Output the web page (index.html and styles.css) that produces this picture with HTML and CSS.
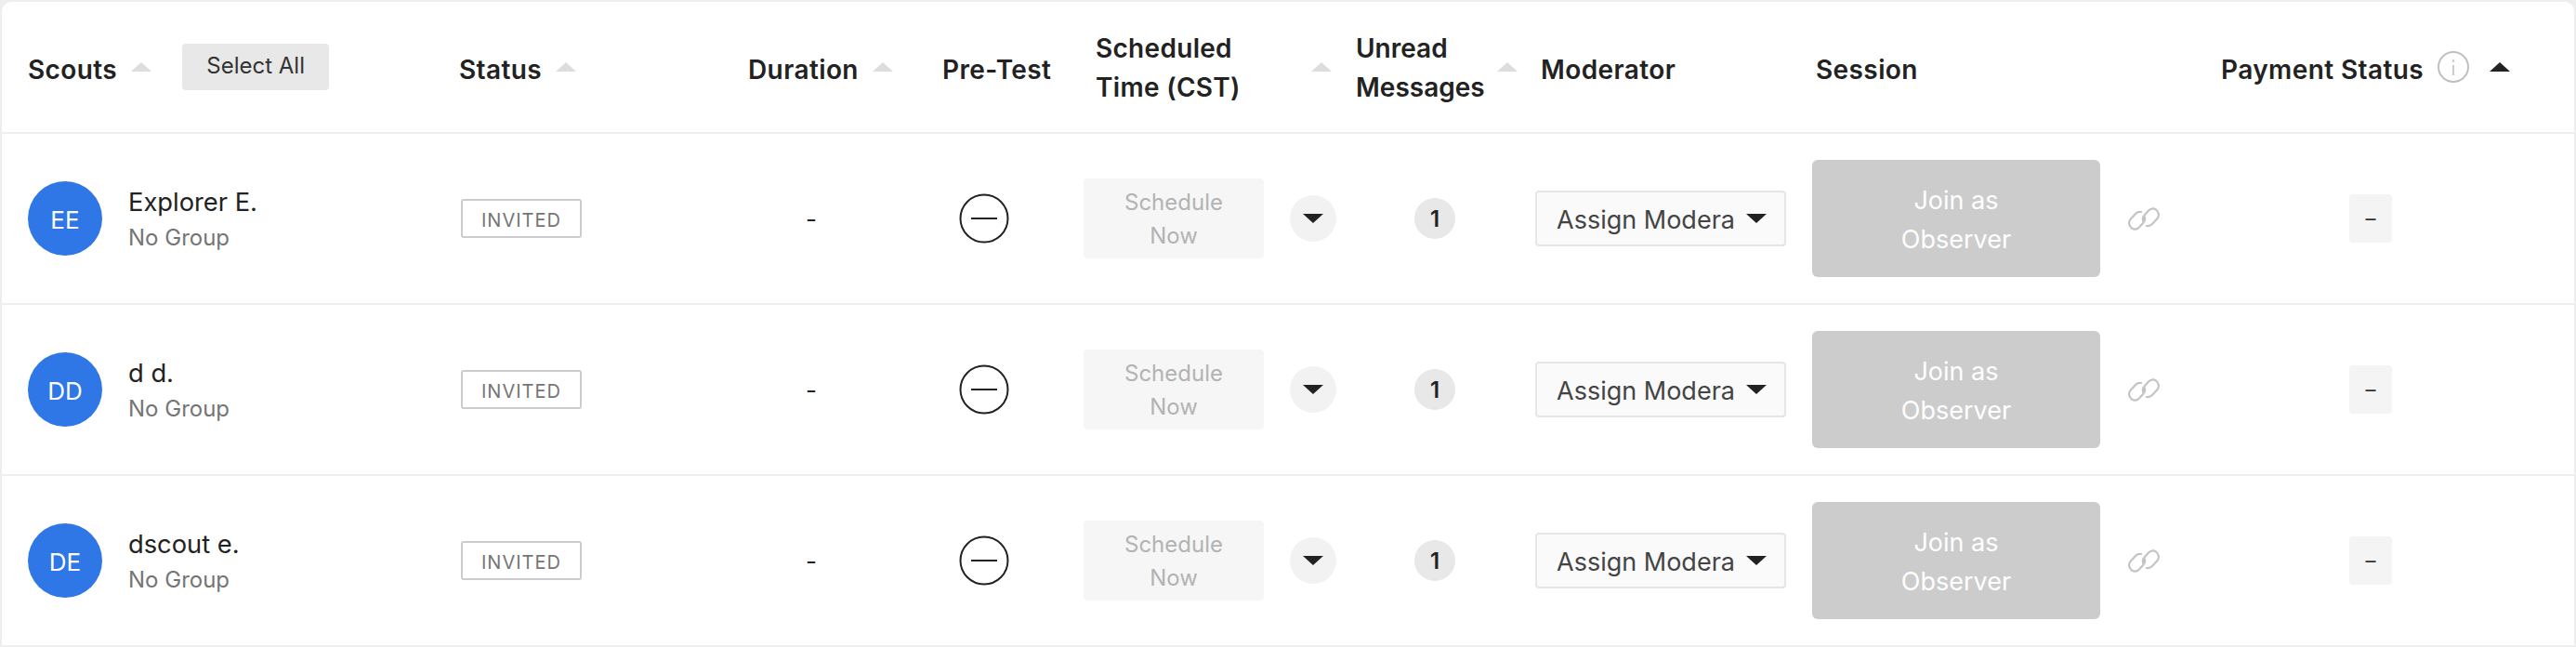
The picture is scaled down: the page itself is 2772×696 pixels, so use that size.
FILE: index.html
```html
<!DOCTYPE html>
<html lang="en">
<head>
<meta charset="utf-8">
<title>Scouts</title>
<link rel="stylesheet" href="styles.css">
</head>
<body>
<main class="card">
  <div class="row head">
    <div class="c-scout"><span class="th">Scouts</span><i class="sort"></i><button class="select-all">Select All</button></div>
    <div class="c-status"><span class="th">Status</span><i class="sort"></i></div>
    <div class="c-duration"><span class="th">Duration</span><i class="sort"></i></div>
    <div class="c-pretest"><span class="th">Pre-Test</span></div>
    <div class="c-sched"><span class="th th-wide">Scheduled Time (CST)</span><i class="sort"></i></div>
    <div class="c-unread"><span class="th th-narrow">Unread Messages</span><i class="sort"></i></div>
    <div class="c-mod"><span class="th">Moderator</span></div>
    <div class="c-session"><span class="th">Session</span></div>
    <div class="c-pay"><span class="th">Payment Status</span>
      <svg class="info" viewBox="0 0 34 34" aria-hidden="true"><circle cx="17" cy="17" r="16" fill="none" stroke="#c0c0c0" stroke-width="2"/><path d="M17 15v11" stroke="#c0c0c0" stroke-width="1.600"/><circle cx="17" cy="10.500" r="1.200" fill="#c0c0c0"/></svg>
      <i class="sort dark"></i></div>
  </div>

  <div class="row body">
    <div class="c-scout"><span class="avatar">EE</span><div class="who"><div class="name">Explorer E.</div><div class="group">No Group</div></div></div>
    <div class="c-status"><span class="tag">INVITED</span></div>
    <div class="c-duration"><span class="dash">-</span></div>
    <div class="c-pretest"><svg class="minus" viewBox="0 0 54 54" aria-hidden="true"><circle cx="27" cy="27" r="25.500" fill="none" stroke="#222" stroke-width="2"/><path d="M13 27h28" stroke="#222" stroke-width="2"/></svg></div>
    <div class="c-sched"><button class="schedule">Schedule Now</button><span class="round"><i class="down"></i></span></div>
    <div class="c-unread"><span class="count">1</span></div>
    <div class="c-mod"><div class="select"><span class="select-text">Assign Modera</span><i class="down"></i></div></div>
    <div class="c-session"><button class="join">Join as Observer</button><svg class="link" viewBox="0 0 34 25" aria-hidden="true"><path d="M14 5C11 4.500 9 6 8 7L2.500 13C0 16 1 20 4 22.500C7 24.500 10 23.500 12 21.500L16 17C18 15 18.500 12 17.500 10" /><path d="M20 20C23 20.500 25 19 26 18L31.500 12C34 9 33 5 30 2.500C27 .5 24 1.500 22 3.500L18 8C16 10 15.500 13 16.500 15"/></svg></div>
    <div class="c-pay"><span class="pay-box">–</span></div>
  </div>

  <div class="row body">
    <div class="c-scout"><span class="avatar">DD</span><div class="who"><div class="name">d d.</div><div class="group">No Group</div></div></div>
    <div class="c-status"><span class="tag">INVITED</span></div>
    <div class="c-duration"><span class="dash">-</span></div>
    <div class="c-pretest"><svg class="minus" viewBox="0 0 54 54" aria-hidden="true"><circle cx="27" cy="27" r="25.500" fill="none" stroke="#222" stroke-width="2"/><path d="M13 27h28" stroke="#222" stroke-width="2"/></svg></div>
    <div class="c-sched"><button class="schedule">Schedule Now</button><span class="round"><i class="down"></i></span></div>
    <div class="c-unread"><span class="count">1</span></div>
    <div class="c-mod"><div class="select"><span class="select-text">Assign Modera</span><i class="down"></i></div></div>
    <div class="c-session"><button class="join">Join as Observer</button><svg class="link" viewBox="0 0 34 25" aria-hidden="true"><path d="M14 5C11 4.500 9 6 8 7L2.500 13C0 16 1 20 4 22.500C7 24.500 10 23.500 12 21.500L16 17C18 15 18.500 12 17.500 10" /><path d="M20 20C23 20.500 25 19 26 18L31.500 12C34 9 33 5 30 2.500C27 .5 24 1.500 22 3.500L18 8C16 10 15.500 13 16.500 15"/></svg></div>
    <div class="c-pay"><span class="pay-box">–</span></div>
  </div>

  <div class="row body">
    <div class="c-scout"><span class="avatar">DE</span><div class="who"><div class="name">dscout e.</div><div class="group">No Group</div></div></div>
    <div class="c-status"><span class="tag">INVITED</span></div>
    <div class="c-duration"><span class="dash">-</span></div>
    <div class="c-pretest"><svg class="minus" viewBox="0 0 54 54" aria-hidden="true"><circle cx="27" cy="27" r="25.500" fill="none" stroke="#222" stroke-width="2"/><path d="M13 27h28" stroke="#222" stroke-width="2"/></svg></div>
    <div class="c-sched"><button class="schedule">Schedule Now</button><span class="round"><i class="down"></i></span></div>
    <div class="c-unread"><span class="count">1</span></div>
    <div class="c-mod"><div class="select"><span class="select-text">Assign Modera</span><i class="down"></i></div></div>
    <div class="c-session"><button class="join">Join as Observer</button><svg class="link" viewBox="0 0 34 25" aria-hidden="true"><path d="M14 5C11 4.500 9 6 8 7L2.500 13C0 16 1 20 4 22.500C7 24.500 10 23.500 12 21.500L16 17C18 15 18.500 12 17.500 10" /><path d="M20 20C23 20.500 25 19 26 18L31.500 12C34 9 33 5 30 2.500C27 .5 24 1.500 22 3.500L18 8C16 10 15.500 13 16.500 15"/></svg></div>
    <div class="c-pay"><span class="pay-box">–</span></div>
  </div>
</main>
</body>
</html>
```

FILE: styles.css
```css
* { box-sizing: border-box; }
html, body { margin: 0; height: 696px; overflow: hidden; }
body {
  background: #eeeeee;
  padding: 2px 2px 0;
  font-family: Inter, "Noto Sans", sans-serif;
  font-size: 26px;
  color: #222;
}
button { font-family: inherit; border: 0; padding: 0; }
.card {
  width: 2768px;
  background: #fff;
  border-radius: 10px 10px 0 0;
}
.row {
  display: grid;
  grid-template-columns: 492px 287px 184px 188px 305px 192px 295px 435px 390px;
  align-items: center;
  border-bottom: 2px solid #eeeeee;
}
.row > div { display: flex; align-items: center; }
.head { height: 142px; }
.body { height: 184px; }

.th { font-weight: 600; line-height: 42px; color: #222; font-size: 28px; letter-spacing: .4px; padding-top: 5px; }
.th-wide { width: 200px; padding-top: 2px; letter-spacing: .3px; }
.th-narrow { width: 170px; padding-top: 2px; letter-spacing: 0; }
.sort {
  display: block;
  width: 0; height: 0;
  border-left: 11px solid transparent;
  border-right: 11px solid transparent;
  border-bottom: 10px solid #dddddd;
}
.sort.dark { border-bottom-color: #222; margin-left: 22px; }
.down {
  display: block;
  width: 0; height: 0;
  border-left: 11px solid transparent;
  border-right: 11px solid transparent;
  border-top: 10px solid #222;
}

.c-scout { padding-left: 28px; }
.head .c-scout .sort { margin-left: 15px; }
.select-all {
  margin-left: 33px;
  width: 158px; height: 50px;
  background: #e8e8e8;
  border-radius: 4px;
  font-size: 24px;
  line-height: 46px;
  padding-bottom: 2px;
  color: #333;
}
.head .c-status .sort { margin-left: 15px; }
.c-status { padding-left: 2px; }
.head .c-status { padding-left: 0; }
.head .c-duration { padding-left: 24px; }
.head .c-duration .sort { margin-left: 15px; }
.body .c-duration { justify-content: center; }
.head .c-pretest { padding-left: 49px; }
.body .c-pretest { padding-left: 67px; }
.c-sched { padding-left: 13px; }
.head .c-sched { padding-left: 26px; }
.head .c-sched .sort { margin-left: 32px; }
.c-unread { padding-left: 64px; }
.head .c-unread { padding-left: 1px; }
.head .c-unread .sort { margin-left: -18px; }
.c-mod { padding-left: 2px; }
.head .c-mod { padding-left: 8px; }
.head .c-session { padding-left: 9px; }
.c-session { padding-left: 5px; }
.head .c-pay { padding-left: 10px; }
.c-pay { padding-left: 148px; }

.avatar {
  flex: none;
  width: 80px; height: 80px;
  border-radius: 50%;
  background: #2f76e6;
  color: #fff;
  display: flex; align-items: center; justify-content: center;
  font-size: 26px;
  padding-top: 2px;
}
.who { margin-left: 28px; padding-top: 2px; }
.name { font-size: 27.300px; line-height: 36px; color: #222; margin-bottom: 3px; }
.group { font-size: 24px; line-height: 34px; color: #757575; }
.tag {
  width: 130px; height: 42px;
  border: 2px solid #cccccc;
  border-radius: 3px;
  display: flex; align-items: center; justify-content: center;
  font-size: 20px;
  letter-spacing: 1px;
  color: #757575;
  padding-top: 4px;
}
.dash { font-size: 26px; color: #222; }
.minus { width: 54px; height: 54px; display: block; }
.schedule {
  width: 194px; height: 86px;
  background: #f6f6f6;
  border-radius: 4px;
  color: #b3b3b3;
  font-size: 24px;
  line-height: 36px;
  padding: 2px 30px 0;
}
.round {
  width: 50px; height: 50px;
  margin-left: 28px;
  border-radius: 50%;
  background: #f2f2f2;
  display: flex; align-items: center; justify-content: center;
}
.count {
  width: 44px; height: 44px;
  border-radius: 50%;
  background: #e8e8e8;
  display: flex; align-items: center; justify-content: center;
  font-size: 24px;
  font-weight: 600;
}
.select {
  width: 270px; height: 60px;
  border: 2px solid #e6e6e6;
  border-radius: 4px;
  background: #fafafa;
  display: flex; align-items: center;
  padding-left: 21px;
}
.select-text {
  width: 190px;
  white-space: nowrap;
  color: #444;
  font-size: 27px;
  padding-top: 2px;
}
.select .down { margin-left: 14px; }
.join {
  width: 310px; height: 126px;
  background: #cccccc;
  border-radius: 6px;
  color: #fff;
  font-size: 27px;
  line-height: 42px;
  padding: 3px 70px 0;
}
.link { width: 34px; height: 25px; margin-left: 30px; fill: none; stroke: #c4c4c4; stroke-width: 2.200; stroke-linecap: round; }
.pay-box {
  width: 46px; height: 52px;
  border-radius: 4px;
  background: #f4f4f4;
  display: flex; align-items: center; justify-content: center;
  font-size: 22px;
  color: #333;
}
.info { width: 34px; height: 34px; margin-left: 15px; }
```
